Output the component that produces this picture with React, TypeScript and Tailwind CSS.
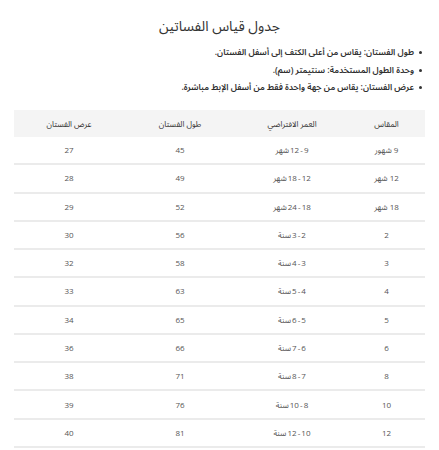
import React from "react";

const rows: [string, string, string, string][] = [
  ["9 شهور", "9 - 12 شهر", "45", "27"],
  ["12 شهر", "12 - 18 شهر", "49", "28"],
  ["18 شهر", "18 - 24 شهر", "52", "29"],
  ["2", "2 - 3 سنة", "56", "30"],
  ["3", "3 - 4 سنة", "58", "32"],
  ["4", "4 - 5 سنة", "63", "33"],
  ["5", "5 - 6 سنة", "65", "34"],
  ["6", "6 - 7 سنة", "66", "36"],
  ["8", "7 - 8 سنة", "71", "38"],
  ["10", "8 - 10 سنة", "76", "39"],
  ["12", "10 - 12 سنة", "81", "40"],
];

const bullets = [
  "طول الفستان: يقاس من أعلى الكتف إلى أسفل الفستان.",
  "وحدة الطول المستخدمة: سنتيمتر (سم).",
  "عرض الفستان: يقاس من جهة واحدة فقط من أسفل الإبط مباشرة.",
];

export default function App() {
  return (
    <div
      dir="rtl"
      className="w-[439px] h-[450px] bg-white overflow-hidden"
      style={{
        fontFamily:
          "'Open Sans', 'Noto Sans Arabic', 'Noto Kufi Arabic', 'Noto Naskh Arabic', 'DejaVu Sans', sans-serif",
      }}
    >
      <h1 className="pt-[16px] h-[36px] text-center text-[14px] leading-[20px] text-[#333]">
        جدول قياس الفساتين
      </h1>
      <ul className="mt-[8px] pr-[17px] flex flex-col text-[8.5px] font-semibold text-[#2e2e2e]">
        {bullets.map((b) => (
          <li key={b} className="flex items-center gap-[5px] h-[17.5px]">
            <span className="w-[3px] h-[3px] rounded-full bg-[#333] shrink-0" />
            <span>{b}</span>
          </li>
        ))}
      </ul>
      <div className="mx-[14px] mt-[13.5px]">
        <div className="grid grid-cols-[77px_112px_112px_110px] h-[27px] items-center bg-[#f4f4f4] text-[8px] text-[#333] text-center">
          <div>المقاس</div>
          <div>العمر الافتراضي</div>
          <div>طول الفستان</div>
          <div>عرض الفستان</div>
        </div>
        {rows.map((r) => (
          <div
            key={r[0]}
            className="grid grid-cols-[77px_112px_112px_110px] h-[28.27px] items-center border-b-2 border-[#ebebeb] text-[8px] text-[#555] text-center"
          >
            <div>{r[0]}</div>
            <div className="[word-spacing:-1px]">{r[1]}</div>
            <div>{r[2]}</div>
            <div>{r[3]}</div>
          </div>
        ))}
      </div>
    </div>
  );
}
